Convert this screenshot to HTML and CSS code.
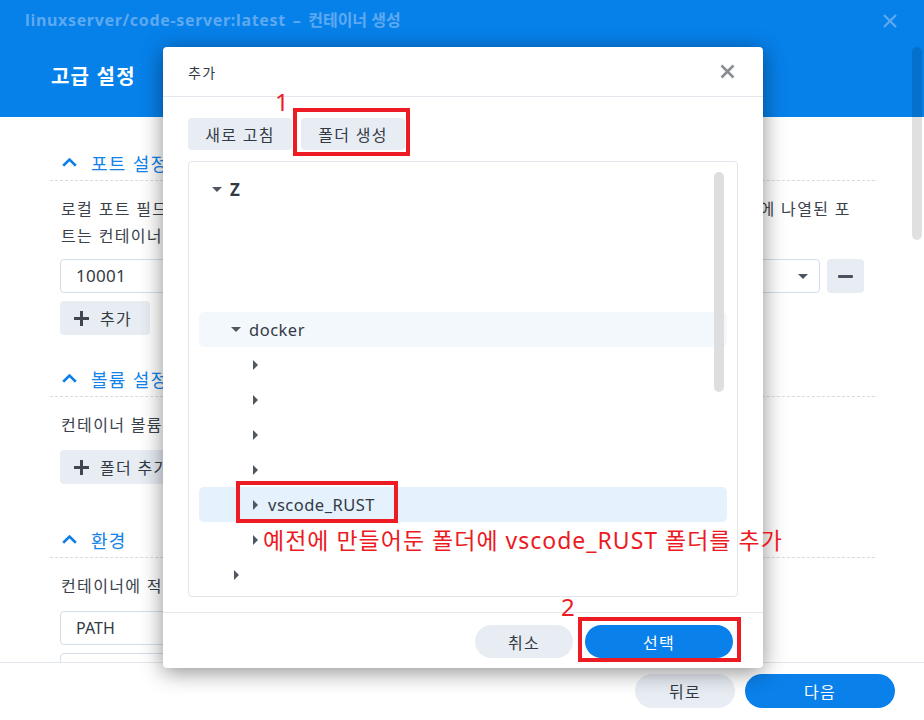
FILE: index.html
```html
<!DOCTYPE html>
<html lang="ko">
<head>
<meta charset="utf-8">
<title>컨테이너 생성</title>
<link rel="stylesheet" href="styles.css">
</head>
<body>
<div class="window">
  <div class="titlebar">
    <div class="wtitle">linuxserver/code-server:latest – <span class="wtitle-ko">컨테이너 생성</span></div>
    <svg class="wclose" viewBox="0 0 16 16" width="16" height="16"><path d="M2 2L14 14M14 2L2 14" stroke="#5EA9F0" stroke-width="2.2" fill="none"/></svg>
  </div>

  <div class="scroll">
    <div class="banner">고급 설정</div>
    <div class="content">
      <div class="sec-head">
        <svg class="chev" viewBox="0 0 15 9" width="15" height="9"><path d="M1.2 7.8L7.5 1.6L13.8 7.8" stroke="#0B7FE6" stroke-width="2.6" fill="none"/></svg>
        <span>포트 설정</span>
      </div>
      <p class="para">로컬 포트 필드를 비워 두면 시스템이 사용 가능한 포트를 자동으로 할당합니다. 컨테이너 이미지에 나열된 포<br>트는 컨테이너를 생성한 후에는 편집할 수 없습니다.</p>
      <div class="port-row">
        <div class="field num-field">10001</div>
        <div class="field"></div>
        <div class="field select"><span class="sel-caret"></span></div>
        <button class="square-btn"><span class="minus-bar"></span></button>
      </div>
      <button class="add-btn"><svg viewBox="0 0 15 15" width="15" height="15"><path d="M6 0h3v6h6v3H9v6H6V9H0V6h6z" fill="#3F4650"/></svg><span>추가</span></button>

      <div class="sec-head sec-gap">
        <svg class="chev" viewBox="0 0 15 9" width="15" height="9"><path d="M1.2 7.8L7.5 1.6L13.8 7.8" stroke="#0B7FE6" stroke-width="2.6" fill="none"/></svg>
        <span>볼륨 설정</span>
      </div>
      <p class="para">컨테이너 볼륨으로 마운트할 폴더를 추가합니다.</p>
      <button class="add-btn add-gap"><svg viewBox="0 0 15 15" width="15" height="15"><path d="M6 0h3v6h6v3H9v6H6V9H0V6h6z" fill="#3F4650"/></svg><span>폴더 추가</span></button>

      <div class="sec-head sec-gap2">
        <svg class="chev" viewBox="0 0 15 9" width="15" height="9"><path d="M1.2 7.8L7.5 1.6L13.8 7.8" stroke="#0B7FE6" stroke-width="2.6" fill="none"/></svg>
        <span>환경</span>
      </div>
      <p class="para">컨테이너에 적용할 환경 변수를 설정합니다.</p>
      <div class="env-row">
        <div class="field">PATH</div>
      </div>
      <div class="env-row next">
        <div class="field"></div>
      </div>
    </div>
    <div class="vbar"></div>
  </div>

  <div class="footer">
    <button class="pill gray w100">뒤로</button>
    <button class="pill blue w150">다음</button>
  </div>

  <div class="dialog">
    <div class="dlg-head">
      <span>추가</span>
      <svg viewBox="0 0 15 15" width="15" height="15"><path d="M1.5 1.5L13.5 13.5M13.5 1.5L1.5 13.5" stroke="#898E95" stroke-width="2.6" fill="none"/></svg>
    </div>
    <div class="dlg-body">
      <div class="toolbar">
        <button class="tb-btn">새로 고침</button>
        <button class="tb-btn">폴더 생성</button>
      </div>
      <div class="tree">
        <div class="row l0"><span class="cbox"><span class="c-down"></span></span><span class="label bold">Z</span></div>
        <div class="row"></div>
        <div class="row"></div>
        <div class="row"></div>
        <div class="row l1 soft"><span class="cbox"><span class="c-down"></span></span><span class="label">docker</span></div>
        <div class="row l2"><span class="cbox"><span class="c-right"></span></span></div>
        <div class="row l2"><span class="cbox"><span class="c-right"></span></span></div>
        <div class="row l2"><span class="cbox"><span class="c-right"></span></span></div>
        <div class="row l2"><span class="cbox"><span class="c-right"></span></span></div>
        <div class="row l2 picked"><span class="cbox"><span class="c-right"></span></span><span class="label">vscode_RUST</span></div>
        <div class="row l2"><span class="cbox"><span class="c-right"></span></span></div>
        <div class="row l1"><span class="cbox"><span class="c-right"></span></span></div>
        <div class="tree-thumb"></div>
      </div>
    </div>
    <div class="dlg-foot">
      <button class="pill gray w98">취소</button>
      <button class="pill blue w148">선택</button>
    </div>

    <span class="num n1">1</span>
    <span class="mark m1"></span>
    <span class="mark m2"></span>
    <span class="note">예전에 만들어둔 폴더에 vscode_RUST 폴더를 추가</span>
    <span class="num n2">2</span>
    <span class="mark m3"></span>
  </div>
</div>
</body>
</html>
```
FILE: styles.css
```css
* { box-sizing: border-box; }
body {
  margin: 0;
  font-family: "Noto Sans", "Noto Sans CJK KR", sans-serif;
  letter-spacing: 0.08em;
  color: #333a44;
  background: #fff;
}
button { font-family: inherit; letter-spacing: inherit; cursor: pointer; }

.window {
  position: relative;
  width: 924px;
  height: 720px;
  overflow: hidden;
  background: #fff;
}

/* title bar */
.titlebar {
  height: 47px;
  background: #0681ea;
  display: flex;
  justify-content: space-between;
  align-items: flex-start;
  padding: 9px 26px 0 25px;
}
.wtitle {
  font-size: 16px;
  font-weight: 700;
  line-height: 22px;
  letter-spacing: 0.67px;
  word-spacing: 2px;
  color: #5ea9f0;
}
.wtitle-ko { letter-spacing: 0; word-spacing: 0; }
.wclose { margin-top: 4px; }

/* scroll area */
.scroll {
  position: relative;
  height: 615px;
  overflow: hidden;
}
.banner {
  height: 70px;
  background: #0681ea;
  color: #fff;
  font-size: 20px;
  font-weight: 700;
  line-height: 32px;
  letter-spacing: 0.06em;
  padding: 14px 0 0 51px;
}
.content {
  margin-left: 50px;
  width: 825px;
  padding-top: 28px;
}
.sec-head {
  height: 36px;
  border-bottom: 1px dashed #d3dbe5;
  display: flex;
  align-items: center;
  gap: 14px;
  padding-left: 12px;
  color: #1283ea;
  font-size: 18px;
}
.sec-gap { margin-top: 26px; }
.sec-gap2 { margin-top: 38px; }
.para {
  margin: 15px 0 0;
  padding-left: 11px;
  font-size: 16px;
  line-height: 27px;
  letter-spacing: 1.35px;
  white-space: nowrap;
  color: #3a414b;
}
.port-row {
  display: grid;
  grid-template-columns: 1fr 1fr 1fr 37px;
  gap: 7px;
  margin-top: 9px;
  padding: 0 11px 0 10px;
}
.field {
  height: 34px;
  border: 1px solid #d5dee8;
  border-radius: 4px;
  padding-left: 15px;
  font-size: 16px;
  line-height: 32px;
  letter-spacing: 0;
  color: #333a44;
}
.num-field { font-size: 17px; letter-spacing: 0.3px; }
.select {
  display: flex;
  align-items: center;
  justify-content: flex-end;
  padding-right: 11px;
}
.sel-caret {
  width: 0;
  height: 0;
  border-left: 5px solid transparent;
  border-right: 5px solid transparent;
  border-top: 5px solid #4b5360;
}
.square-btn {
  height: 34px;
  border: none;
  border-radius: 4px;
  background: #e8edf4;
  display: flex;
  align-items: center;
  justify-content: center;
  padding: 0;
}
.minus-bar {
  width: 15px;
  height: 3px;
  background: #4a5260;
  border-radius: 1px;
}
.add-btn {
  display: flex;
  align-items: center;
  gap: 11px;
  width: max-content;
  height: 34px;
  margin: 8px 0 0 10px;
  padding: 0 18px 0 14px;
  border: none;
  border-radius: 4px;
  background: #e8edf4;
  font-size: 16px;
  color: #333a44;
}
.add-gap { margin-top: 11px; }
.env-row {
  margin-top: 11px;
  padding: 0 11px 0 10px;
  display: grid;
  grid-template-columns: 1fr 1fr;
  gap: 7px;
}
.env-row.next { margin-top: 8px; }
.vbar {
  position: absolute;
  top: 0;
  right: 2px;
  width: 10px;
  height: 193px;
  border-radius: 5px;
  background: rgba(0, 0, 0, 0.12);
}

/* footer */
.footer {
  height: 58px;
  border-top: 1px solid #e3e8ee;
  display: flex;
  justify-content: flex-end;
  gap: 10px;
  padding: 11px 29px 0 0;
}
.pill {
  height: 34px;
  border: none;
  border-radius: 17px;
  font-size: 16px;
  padding: 0;
}
.gray { background: #e8edf4; color: #333a44; }
.blue { background: #0a80ea; color: #fff; }
.w100 { width: 100px; }
.w150 { width: 150px; }
.w98 { width: 98px; height: 33px; }
.w148 { width: 148px; height: 33px; }

/* dialog */
.dialog {
  position: absolute;
  left: 163px;
  top: 47px;
  width: 600px;
  height: 621px;
  background: #fff;
  border-radius: 4px;
  box-shadow: 0 4px 22px rgba(0, 0, 0, 0.45);
  display: flex;
  flex-direction: column;
}
.dlg-head {
  height: 50px;
  border-bottom: 1px solid #e3e8ee;
  display: flex;
  align-items: center;
  justify-content: space-between;
  padding: 0 28px 0 25px;
  font-size: 14px;
  color: #333a44;
}
.dlg-body {
  padding: 21px 25px 15px;
}
.toolbar {
  display: flex;
  gap: 9px;
}
.tb-btn {
  width: 104px;
  height: 32px;
  border: none;
  border-radius: 4px;
  background: #e8edf4;
  font-size: 16px;
  color: #333a44;
  padding: 0;
}
.tree {
  position: relative;
  margin-top: 11px;
  height: 436px;
  border: 1px solid #e1e6ec;
  border-radius: 4px;
  padding: 10px;
}
.row {
  height: 35px;
  display: flex;
  align-items: center;
  border-radius: 5px;
}
.l0 { padding-left: 8px; }
.l1 { padding-left: 27px; }
.l2 { padding-left: 46px; }
.soft { background: #f3f8fd; }
.picked { background: #e5f1fd; }
.cbox {
  width: 20px;
  height: 35px;
  display: flex;
  align-items: center;
  justify-content: center;
}
.c-down {
  width: 0;
  height: 0;
  border-left: 5px solid transparent;
  border-right: 5px solid transparent;
  border-top: 5px solid #50575f;
}
.c-right {
  width: 0;
  height: 0;
  border-top: 5px solid transparent;
  border-bottom: 5px solid transparent;
  border-left: 5px solid #50575f;
}
.label {
  margin-left: 3px;
  font-size: 16.5px;
  line-height: 20px;
  letter-spacing: 0.5px;
  color: #333a44;
}
.label.bold { font-weight: 700; font-size: 17px; }
.tree-thumb {
  position: absolute;
  top: 10px;
  right: 13px;
  width: 10px;
  height: 220px;
  border-radius: 5px;
  background: #dedede;
}
.dlg-foot {
  height: 56px;
  border-top: 1px solid #e3e8ee;
  display: flex;
  justify-content: flex-end;
  gap: 12px;
  padding: 12px 30px 0 0;
}

/* annotations */
.mark {
  position: absolute;
  border: 4px solid #ed1c24;
}
.m1 { left: 130px; top: 61px; width: 117px; height: 48px; }
.m2 { left: 73px; top: 434px; width: 162px; height: 42px; }
.m3 { left: 415px; top: 570px; width: 163px; height: 45px; }
.num {
  position: absolute;
  font-size: 24px;
  line-height: 24px;
  letter-spacing: 0;
  color: #ed1c24;
}
.n1 { left: 112px; top: 43px; }
.n2 { left: 398px; top: 548px; }
.note {
  position: absolute;
  left: 100px;
  top: 478px;
  font-size: 23px;
  line-height: 30px;
  letter-spacing: 1px;
  white-space: nowrap;
  color: #ec1a23;
}
```
